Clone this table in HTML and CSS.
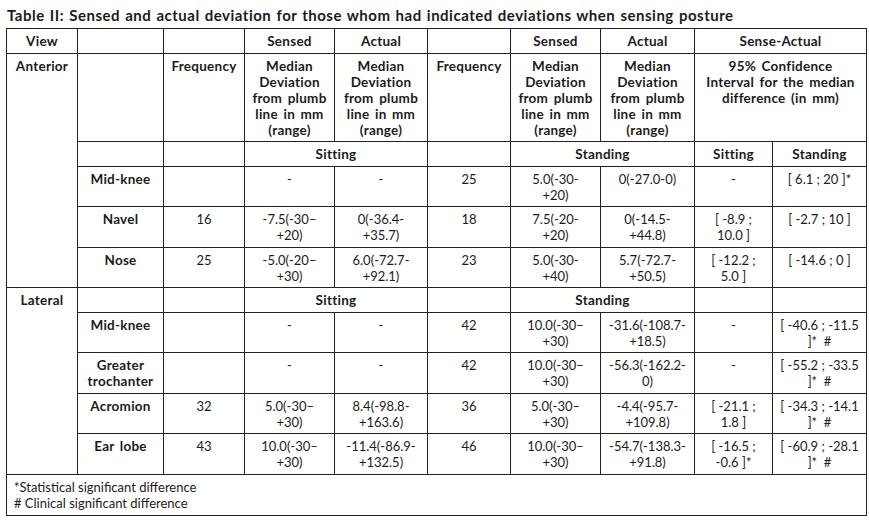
FILE: index.html
```html
<!DOCTYPE html>
<html>
<head>
<meta charset="utf-8">
<link rel="stylesheet" href="styles.css">
</head>
<body>
<div class="page">
  <h1 class="title">Table II: Sensed and actual deviation for those whom had indicated deviations when sensing posture</h1>
  <table class="data">
    <colgroup>
      <col class="w71"><col class="w86"><col class="w81"><col class="w90"><col class="w93">
      <col class="w83"><col class="w90"><col class="w94"><col class="w78"><col class="w94">
    </colgroup>
    <tr>
      <th>View</th><th></th><th></th><th>Sensed</th><th>Actual</th><th></th><th>Sensed</th><th>Actual</th><th colspan="2">Sense-Actual</th>
    </tr>
    <tr>
      <th rowspan="5">Anterior</th><th></th><th>Frequency</th>
      <th>Median<br>Deviation<br>from plumb<br>line in mm<br>(range)</th>
      <th>Median<br>Deviation<br>from plumb<br>line in mm<br>(range)</th>
      <th>Frequency</th>
      <th>Median<br>Deviation<br>from plumb<br>line in mm<br>(range)</th>
      <th>Median<br>Deviation<br>from plumb<br>line in mm<br>(range)</th>
      <th colspan="2">95% Confidence<br>Interval for the median<br>difference (in mm)</th>
    </tr>
    <tr>
      <th></th><th></th><th colspan="2">Sitting</th><th></th><th colspan="2">Standing</th><th>Sitting</th><th>Standing</th>
    </tr>
    <tr>
      <th>Mid-knee</th><td></td><td>-</td><td>-</td><td>25</td><td>5.0(-30-<br>+20)</td><td>0(-27.0-0)</td><td>-</td><td>[ 6.1 ; 20 ]*</td>
    </tr>
    <tr>
      <th>Navel</th><td>16</td><td>-7.5(-30–<br>+20)</td><td>0(-36.4-<br>+35.7)</td><td>18</td><td>7.5(-20-<br>+20)</td><td>0(-14.5-<br>+44.8)</td><td>[ -8.9 ;<br>10.0 ]</td><td>[ -2.7 ; 10 ]</td>
    </tr>
    <tr>
      <th>Nose</th><td>25</td><td>-5.0(-20–<br>+30)</td><td>6.0(-72.7-<br>+92.1)</td><td>23</td><td>5.0(-30-<br>+40)</td><td>5.7(-72.7-<br>+50.5)</td><td>[ -12.2 ;<br>5.0 ]</td><td>[ -14.6 ; 0 ]</td>
    </tr>
    <tr>
      <th rowspan="5">Lateral</th><th></th><th></th><th colspan="2">Sitting</th><th></th><th colspan="2">Standing</th><th></th><th></th>
    </tr>
    <tr>
      <th>Mid-knee</th><td></td><td>-</td><td>-</td><td>42</td><td>10.0(-30–<br>+30)</td><td>-31.6(-108.7-<br>+18.5)</td><td>-</td><td>[ -40.6 ; -11.5<br>]* &nbsp;#</td>
    </tr>
    <tr>
      <th>Greater<br>trochanter</th><td></td><td>-</td><td>-</td><td>42</td><td>10.0(-30–<br>+30)</td><td>-56.3(-162.2-<br>0)</td><td>-</td><td>[ -55.2 ; -33.5<br>]* &nbsp;#</td>
    </tr>
    <tr>
      <th>Acromion</th><td>32</td><td>5.0(-30–<br>+30)</td><td>8.4(-98.8-<br>+163.6)</td><td>36</td><td>5.0(-30–<br>+30)</td><td>-4.4(-95.7-<br>+109.8)</td><td>[ -21.1 ;<br>1.8 ]</td><td>[ -34.3 ; -14.1<br>]* &nbsp;#</td>
    </tr>
    <tr>
      <th>Ear lobe</th><td>43</td><td>10.0(-30–<br>+30)</td><td>-11.4(-86.9-<br>+132.5)</td><td>46</td><td>10.0(-30–<br>+30)</td><td>-54.7(-138.3-<br>+91.8)</td><td>[ -16.5 ;<br>-0.6 ]*</td><td>[ -60.9 ; -28.1<br>]* &nbsp;#</td>
    </tr>
    <tr>
      <td colspan="10" class="foot">*Statistical significant difference<br># Clinical significant difference</td>
    </tr>
  </table>
</div>
</body>
</html>
```

FILE: styles.css
```css
html, body {
  margin: 0;
  padding: 0;
  background: #ffffff;
}

.page {
  padding: 7px 0 0 6px;
  font-family: Lato, "Open Sans", sans-serif;
  color: #1b1b1b;
}

.title {
  margin: 0 0 5px 1px;
  font-size: 15px;
  line-height: 16px;
  font-weight: 700;
  letter-spacing: 0.5px;
  word-spacing: 1px;
  white-space: nowrap;
}

.data {
  border-collapse: collapse;
  table-layout: fixed;
  width: 861px;
  font-size: 13px;
  line-height: 16px;
}

.w71 { width: 71px; }
.w78 { width: 78px; }
.w81 { width: 81px; }
.w83 { width: 83px; }
.w86 { width: 86px; }
.w90 { width: 90px; }
.w93 { width: 93px; }
.w94 { width: 94px; }

.data th,
.data td {
  border: 1px solid #222222;
  padding: 4px 2px 3.5px;
  text-align: center;
  vertical-align: top;
  white-space: nowrap;
}

.data th {
  font-size: 13.5px;
  font-weight: 700;
  letter-spacing: 0.25px;
  word-spacing: 2px;
}

.data td {
  font-weight: 400;
}

.data td.foot {
  text-align: left;
  padding: 4px 7px 4px;
}
```
